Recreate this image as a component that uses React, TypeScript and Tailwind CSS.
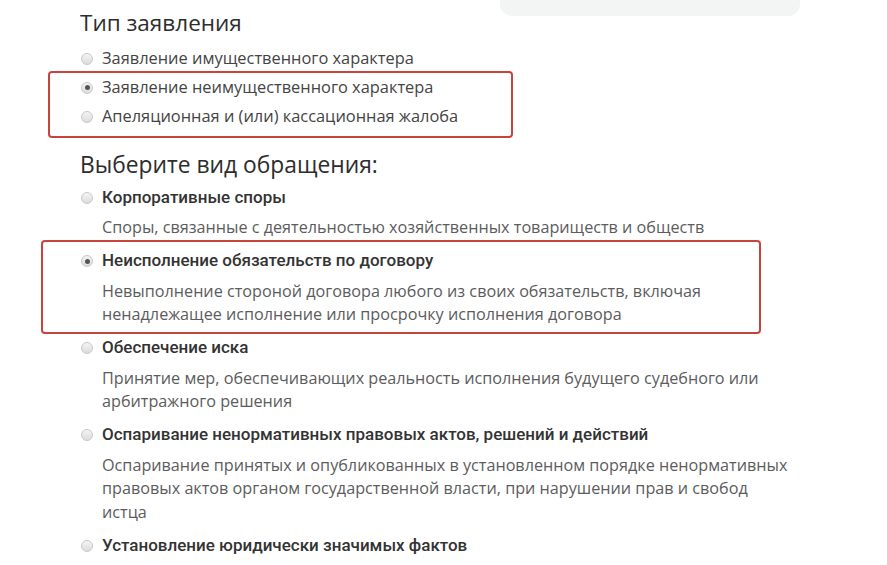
import React from "react";

function Radio({ checked = false }: { checked?: boolean }) {
  return (
    <span className="relative inline-flex h-[12px] w-[12px] shrink-0 items-center justify-center rounded-full border border-[#c9c9c9] bg-gradient-to-b from-[#f4f4f4] to-[#dcdcdc]">
      {checked && <span className="h-[5px] w-[5px] rounded-full bg-[#555]" />}
    </span>
  );
}

function SimpleRow({ label, checked }: { label: string; checked?: boolean }) {
  return (
    <div className="flex h-[29px] items-center gap-[9px] pl-[1px]">
      <Radio checked={checked} />
      <span className="text-[16.4px] text-[#444]">{label}</span>
    </div>
  );
}

function Option({
  title,
  lines,
  checked,
}: {
  title: string;
  lines: string[];
  checked?: boolean;
}) {
  return (
    <div>
      <div className="flex h-[29px] items-center gap-[9px] pl-[1px]">
        <Radio checked={checked} />
        <span
          className="text-[17px] font-medium text-[#333]"
          style={{ fontFamily: 'Roboto, "Open Sans", sans-serif' }}
        >
          {title}
        </span>
      </div>
      {lines.length > 0 && (
        <div className="mt-[4px] pl-[22px] text-[16.2px] leading-[23.5px] text-[#5c5c5c]">
          {lines.map((l, i) => (
            <div key={i} className="whitespace-nowrap">{l}</div>
          ))}
        </div>
      )}
    </div>
  );
}

export default function App() {
  return (
    <div
      className="relative h-[565px] w-[887px] overflow-hidden bg-white"
      style={{ fontFamily: '"Open Sans", "Noto Sans", sans-serif' }}
    >
      <div className="absolute left-[500px] top-0 h-[16px] w-[300px] rounded-b-[12px] bg-[#f3f4f4]" />
      <div className="pl-[80px] pt-[7px]">
        <h2 className="h-[32px] text-[22.5px] leading-[32px] text-[#2d2d2d]">Тип заявления</h2>
        <div className="mt-[5px]">
          <SimpleRow label="Заявление имущественного характера" />
          <div className="relative">
            <div className="pointer-events-none absolute -left-[32px] -top-[2px] h-[67px] w-[465px] rounded-[4px] border-[2.5px] border-[#c8433d]" />
            <SimpleRow label="Заявление неимущественного характера" checked />
            <SimpleRow label="Апеляционная и (или) кассационная жалоба" />
          </div>
        </div>
        <h2 className="mt-[18px] h-[32px] text-[22.8px] leading-[32px] text-[#2d2d2d]">
          Выберите вид обращения:
        </h2>
        <div className="mt-[2px] flex flex-col gap-[7px]">
          <Option
            title="Корпоративные споры"
            lines={["Споры, связанные с деятельностью хозяйственных товариществ и обществ"]}
          />
          <div className="relative">
            <div className="pointer-events-none absolute -left-[39px] -top-[7px] h-[94px] w-[720px] rounded-[4px] border-[2.5px] border-[#c8433d]" />
            <Option
              checked
              title="Неисполнение обязательств по договору"
              lines={[
                "Невыполнение стороной договора любого из своих обязательств, включая",
                "ненадлежащее исполнение или просрочку исполнения договора",
              ]}
            />
          </div>
          <Option
            title="Обеспечение иска"
            lines={[
              "Принятие мер, обеспечивающих реальность исполнения будущего судебного или",
              "арбитражного решения",
            ]}
          />
          <Option
            title="Оспаривание ненормативных правовых актов, решений и действий"
            lines={[
              "Оспаривание принятых и опубликованных в установленном порядке ненормативных",
              "правовых актов органом государственной власти, при нарушении прав и свобод",
              "истца",
            ]}
          />
          <Option title="Установление юридически значимых фактов" lines={[]} />
        </div>
      </div>
    </div>
  );
}
